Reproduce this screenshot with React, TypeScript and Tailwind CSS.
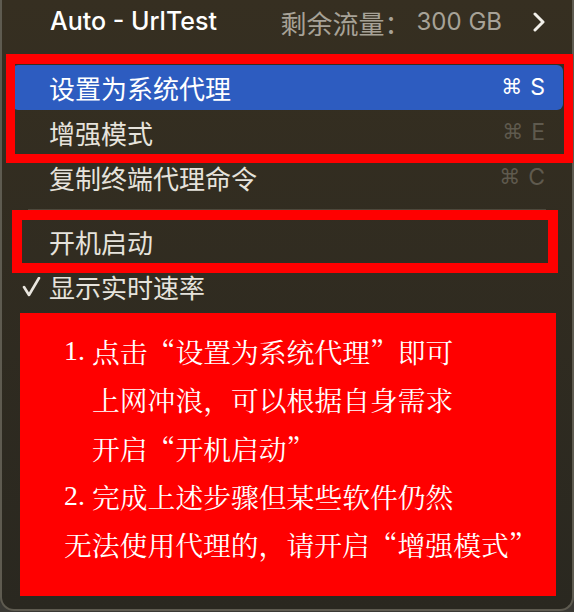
import React from "react";

const cjk = "font-['Noto_Sans_CJK_SC',sans-serif]";

function Shortcut({ k, dim }: { k: string; dim?: boolean }) {
  return (
    <span
      className={`flex items-center gap-[8px] text-[23px] font-['Inter','Noto_Sans',sans-serif] ${
        dim ? "text-[#5f5a4e]" : "text-white"
      }`}
    >
      <span className="font-['DejaVu_Sans',sans-serif] text-[21px]">⌘</span>
      <span>{k}</span>
    </span>
  );
}

function Row({
  label,
  shortcut,
  dim,
  active,
  check,
}: {
  label: string;
  shortcut?: string;
  dim?: boolean;
  active?: boolean;
  check?: boolean;
}) {
  return (
    <div
      className={`ml-[10px] mr-[9px] h-[45px] flex items-center justify-between pl-[37px] pr-[18px] rounded-[6px] relative ${
        active ? "bg-[#2d5cc0]" : ""
      }`}
    >
      {check && (
        <svg className="absolute left-[10px] top-[13px]" width="20" height="20" viewBox="0 0 20 20">
          <polyline points="2,10 7,18 17,1" fill="none" stroke="#e9e6df" strokeWidth="2.6" strokeLinecap="round" strokeLinejoin="round" />
        </svg>
      )}
      <span className={`${cjk} text-[26px] ${active ? "text-white" : "text-[#e6e3dc]"}`}>{label}</span>
      {shortcut && <Shortcut k={shortcut} dim={dim} />}
    </div>
  );
}

export default function App() {
  return (
    <div className="relative w-[574px] h-[612px] bg-[#3a3934] overflow-hidden">
      <div className="w-[574px] h-[611px] border-x-2 border-b-2 border-[#5e5b50] rounded-b-[14px] bg-gradient-to-b from-[#362f21] to-[#2a2820] flex flex-col">
        {/* top row */}
        <div className="h-[44px] flex items-center justify-between pl-[48px] pr-[26px]">
          <span className="font-['Inter',sans-serif] font-medium text-[25px] text-white">Auto - UrlTest</span>
          <div className="flex items-center">
            <span className={`${cjk} text-[26px] text-[#a7a297]`}>剩余流量：</span>
            <span className="font-['Inter',sans-serif] text-[24px] text-[#a7a297] ml-[6px]">300 GB</span>
            <svg className="ml-[30px]" width="14" height="20" viewBox="0 0 14 20">
              <polyline points="3,2 11,10 3,18" fill="none" stroke="#f2f0ea" strokeWidth="3" strokeLinecap="round" strokeLinejoin="round" />
            </svg>
          </div>
        </div>
        <div className="h-[21px]" />
        <Row label="设置为系统代理" shortcut="S" active />
        <Row label="增强模式" shortcut="E" dim />
        <Row label="复制终端代理命令" shortcut="C" dim />
        <div className="h-[19px] flex items-center px-[26px]">
          <div className="h-[2px] w-full bg-[#4d483c]" />
        </div>
        <Row label="开机启动" />
        <Row label="显示实时速率" check />

        <div className="mt-[4px] ml-[18px] w-[536px] h-[283px] bg-[#ff0000] pl-[44px] pt-[14px] text-white text-[27.8px] leading-[48.3px] font-['Noto_Serif_CJK_SC','Noto_Sans_CJK_SC',serif]">
          <div className="flex">
            <span className="w-[28px] font-['Liberation_Serif',serif]">1.</span>
            <span>点击“设置为系统代理”即可</span>
          </div>
          <div className="pl-[28px]">上网冲浪，可以根据自身需求</div>
          <div className="pl-[28px]">开启“开机启动”</div>
          <div className="flex">
            <span className="w-[28px] font-['Liberation_Serif',serif]">2.</span>
            <span>完成上述步骤但某些软件仍然</span>
          </div>
          <div>无法使用代理的，请开启“增强模式”</div>
        </div>
      </div>

      {/* annotation boxes */}
      <div className="absolute left-[6px] top-[54px] w-[567px] h-[109px] border-[9px] border-t-[10px] border-[#ff0000]" />
      <div className="absolute left-[12px] top-[210px] w-[546px] h-[63px] border-[10px] border-[#ff0000]" />
    </div>
  );
}
